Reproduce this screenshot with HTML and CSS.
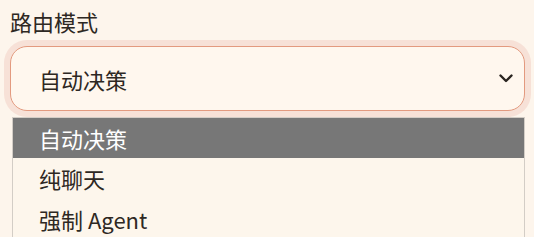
FILE: index.html
```html
<!DOCTYPE html>
<html>
<head>
    <meta charset="utf-8">
    <title>路由模式</title>
    <link rel="stylesheet" href="styles.css">
</head>
<body>
    <div class="field">
        <label class="field-label">路由模式</label>
        <div class="select-box">
            <span class="select-value">自动决策</span>
            <svg class="chevron" width="14" height="9" viewBox="0 0 14 9">
                <path d="M1.5 1.5 L7 7 L12.5 1.5" fill="none" stroke="#2a2420" stroke-width="2.4" stroke-linecap="round" stroke-linejoin="round"/>
            </svg>
        </div>
        <ul class="option-list">
            <li class="option selected">自动决策</li>
            <li class="option">纯聊天</li>
            <li class="option">强制 Agent</li>
        </ul>
    </div>
</body>
</html>
```

FILE: styles.css
```css
body {
    margin: 0;
    padding: 6px 9px 0 10px;
    background: #fdf5ec;
    font-family: "Noto Sans CJK SC", "Noto Sans", sans-serif;
    color: #2e2823;
    overflow: hidden;
}
.field-label {
    display: block;
    font-size: 22px;
    line-height: 30px;
    margin-bottom: 10px;
}
.select-box {
    display: flex;
    align-items: center;
    justify-content: space-between;
    height: 63px;
    padding: 0 11px 0 28px;
    background: #fff7ee;
    border: 1px solid #e39a7f;
    border-radius: 17px;
    box-shadow: 0 0 0 6px #f7e1d7;
    font-size: 22px;
}
.select-value {
    line-height: 30px;
}
.option-list {
    list-style: none;
    margin: 6px 0 0 2px;
    padding: 0;
    background: #fdf6ec;
    border-left: 1px solid #d3cdc6;
    border-right: 1px solid #d3cdc6;
    border-top: 1px solid #d3cdc6;
}
.option {
    height: 41px;
    line-height: 41px;
    padding-left: 26px;
    font-size: 22px;
}
.option.selected {
    background: #777777;
    color: #ffffff;
    height: 40px;
    line-height: 40px;
}
```
